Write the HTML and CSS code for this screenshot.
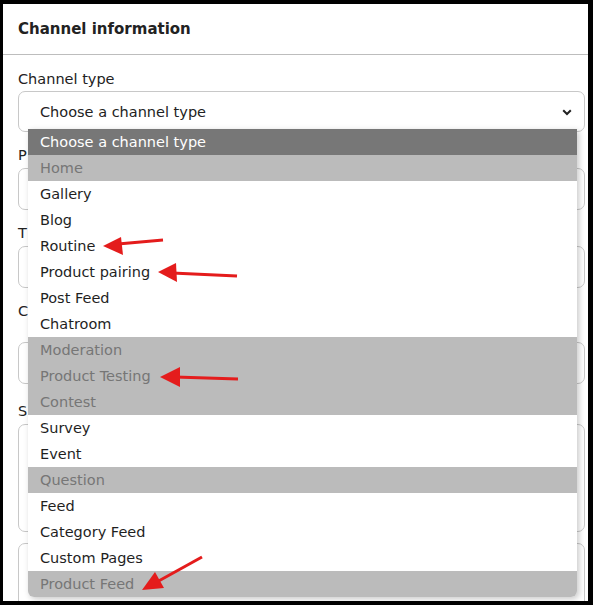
FILE: index.html
```html
<!DOCTYPE html>
<html>
<head>
<meta charset="utf-8">
<link rel="stylesheet" href="styles.css">
</head>
<body>
<div class="frame">
  <div class="card-head">Channel information</div>
  <div class="card-body">
    <div class="field first">
      <div class="label">Channel type</div>
      <div class="select-wrap">
        <div class="select">
          <span>Choose a channel type</span>
          <svg class="chev" width="10" height="7" viewBox="0 0 10 7"><path d="M1.2 1.2 L5 5 L8.8 1.2" fill="none" stroke="#222" stroke-width="2"/></svg>
        </div>
        <ul class="dropdown">
          <li class="head">Choose a channel type</li>
          <li class="off">Home</li>
          <li>Gallery</li>
          <li>Blog</li>
          <li>Routine</li>
          <li>Product pairing</li>
          <li>Post Feed</li>
          <li>Chatroom</li>
          <li class="off">Moderation</li>
          <li class="off">Product Testing</li>
          <li class="off">Contest</li>
          <li>Survey</li>
          <li>Event</li>
          <li class="off">Question</li>
          <li>Feed</li>
          <li>Category Feed</li>
          <li>Custom Pages</li>
          <li class="off">Product Feed</li>
        </ul>
      </div>
    </div>
    <div class="field">
      <div class="label">P</div>
      <div class="input"></div>
    </div>
    <div class="field">
      <div class="label">T</div>
      <div class="input"></div>
    </div>
    <div class="field">
      <div class="label wide">C</div>
      <div class="input"></div>
    </div>
    <div class="field third">
      <div class="label">S</div>
      <div class="input area"></div>
    </div>
    <div class="input next"></div>
  </div>
</div>
<svg class="marks" width="593" height="608" viewBox="0 0 593 608">
  <g fill="#e41c1c" stroke="#e41c1c">
    <line x1="163" y1="240" x2="118" y2="244" stroke-width="3"/>
    <polygon points="103,246 121,237 123,255" stroke="none"/>
    <line x1="237" y1="276" x2="172" y2="273" stroke-width="3"/>
    <polygon points="158,272 176,263 177,282" stroke="none"/>
    <line x1="238" y1="379" x2="175" y2="377" stroke-width="3"/>
    <polygon points="160,377 180,367 180,387" stroke="none"/>
    <line x1="202" y1="557" x2="155" y2="583" stroke-width="3"/>
    <polygon points="142,590 155,572 164,588" stroke="none"/>
  </g>
</svg>
</body>
</html>
```

FILE: styles.css
```css
html, body {
  margin: 0;
  padding: 0;
  background: #ffffff;
}
body {
  width: 593px;
  height: 608px;
  overflow: hidden;
  position: relative;
  font-family: "DejaVu Sans", "Noto Sans", sans-serif;
  color: #222222;
}
.frame {
  box-sizing: border-box;
  width: 593px;
  height: 605px;
  border-style: solid;
  border-color: #000000;
  border-width: 4px 5px 4px 3px;
  background: #ffffff;
  overflow: hidden;
}
.card-head {
  height: 50px;
  display: flex;
  align-items: center;
  padding: 0 15px;
  font-weight: bold;
  font-size: 15px;
  color: #222222;
  border-bottom: 1px solid #bdbdbd;
}
.card-body {
  padding: 0 3px 0 15px;
}
.field {
  margin-top: 13px;
}
.field.first {
  margin-top: 14px;
}
.field.third {
  margin-top: 17px;
}
.label {
  font-size: 14.5px;
  line-height: 20px;
  height: 20px;
  margin-bottom: 3px;
  color: #222222;
}
.label.wide {
  margin-bottom: 21px;
}
.field.first .label {
  margin-bottom: 2px;
}
.select-wrap {
  position: relative;
}
.select {
  box-sizing: border-box;
  height: 41px;
  border: 1px solid #c8c8c8;
  border-radius: 7px;
  display: flex;
  align-items: center;
  justify-content: space-between;
  padding: 0 12px 0 21px;
  font-size: 14.5px;
}
.chev {
  display: block;
  margin-top: 1px;
}
.input {
  box-sizing: border-box;
  height: 42px;
  border: 1px solid #c8c8c8;
  border-radius: 7px;
}
.input.area {
  height: 108px;
}
.input.next {
  margin-top: 11px;
  height: 80px;
}
.dropdown {
  position: absolute;
  left: 10px;
  top: 38px;
  width: 549px;
  margin: 0;
  padding: 0;
  list-style: none;
  background: #ffffff;
  border-radius: 0 0 6px 6px;
  overflow: hidden;
  box-shadow: 2px 2px 6px rgba(0, 0, 0, 0.22);
  z-index: 5;
}
.dropdown li {
  height: 26px;
  line-height: 26px;
  padding-left: 12px;
  font-size: 14.5px;
  color: #1f1f1f;
  white-space: nowrap;
}
.dropdown li.head {
  background: #777777;
  color: #ffffff;
}
.dropdown li.off {
  background: #bbbbbb;
  color: #767676;
}
.marks {
  position: absolute;
  left: 0;
  top: 0;
  pointer-events: none;
  z-index: 10;
}
```
